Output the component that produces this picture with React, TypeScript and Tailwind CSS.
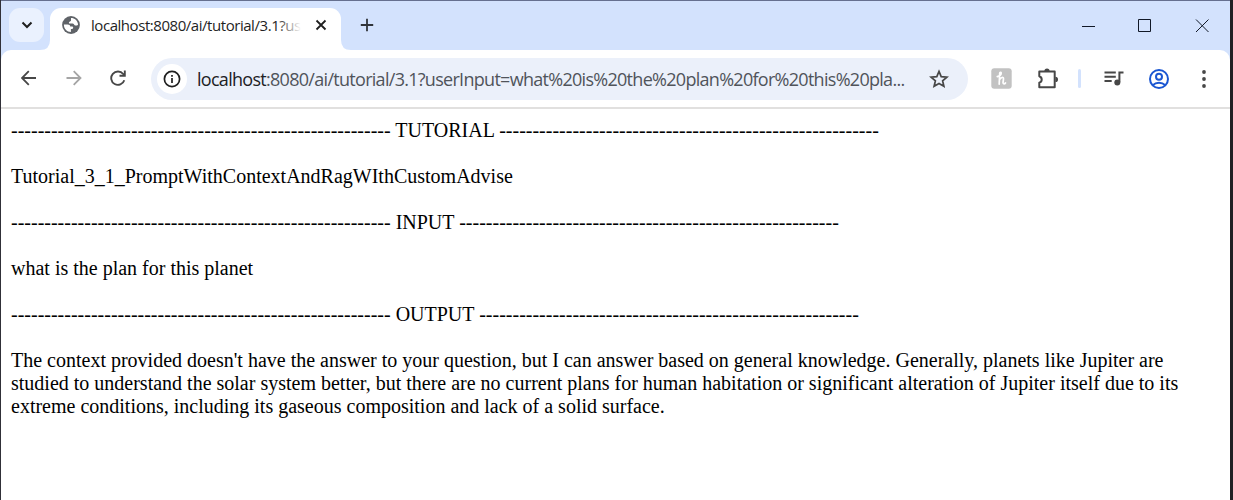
import React from "react";

const dashes = "-".repeat(57);

function Globe() {
  return (
    <svg viewBox="0 0 18 18" className="size-[18px] shrink-0">
      <circle cx="9" cy="9" r="8.9" fill="#5f6368" />
      <path d="M9 1.9 C12.6 1.9 15.8 4.6 16.1 8.4 C15.2 9.8 13.6 9.8 12.6 9.2 C11.7 8.6 11.8 7.6 10.6 7.6 H8 C6.9 7.6 6.5 6.6 7.3 5.9 C8 5.3 8.9 5.7 9 4.6 Z" fill="#fff" />
      <path d="M1.9 8.6 H5.6 C7.4 8.6 8.2 9.3 8.2 10.6 H10.4 C11.6 10.7 11.4 12.8 10.2 12.9 H8.9 V16.1 C4.9 16.1 1.8 12.8 1.9 8.6 Z" fill="#fff" />
    </svg>
  );
}

function Page() {
  return (
    <main className="px-[10px] pt-[10px] text-[20px] leading-[23px] text-black [font-family:'Liberation_Serif',serif] whitespace-nowrap">
      <p>{dashes} TUTORIAL {dashes}</p>
      <p className="mt-[23px]">Tutorial_3_1_PromptWithContextAndRagWIthCustomAdvise</p>
      <p className="mt-[23px]">{dashes} INPUT {dashes}</p>
      <p className="mt-[23px]">what is the plan for this planet</p>
      <p className="mt-[23px]">{dashes} OUTPUT {dashes}</p>
      <p className="mt-[23px]">
        The context provided doesn't have the answer to your question, but I can answer based on general knowledge. Generally, planets like Jupiter are
        <br />
        studied to understand the solar system better, but there are no current plans for human habitation or significant alteration of Jupiter itself due to its
        <br />
        extreme conditions, including its gaseous composition and lack of a solid surface.
      </p>
    </main>
  );
}

export default function App() {
  return (
    <div className="flex h-[500px] w-[1233px] overflow-hidden border-l border-[#303038] bg-[#202124] [font-family:'Open_Sans',sans-serif]">
      <div className="w-[1229px] bg-[#d3e2fd]">
        <header className="flex h-[50px] border-t border-[#66708f]">
          <button className="mt-[7px] ml-2 flex h-[34px] w-[35px] items-center justify-center rounded-[11px] bg-[#eaf1fe]">
            <svg viewBox="0 0 12 8" className="h-2 w-3" fill="none" stroke="#1f1f1f" strokeWidth="2"><path d="M1.5 1.5 6 6l4.5-4.5" /></svg>
          </button>
          <div className="mt-[7px] -ml-[4px] flex h-[42px] w-[322px]">
            <svg viewBox="0 0 10 42" className="h-[42px] w-[10px] shrink-0"><path d="M0 42 Q10 42 10 32 V42Z" fill="#fff" /></svg>
            <div className="flex w-[291px] shrink-0 items-center rounded-t-[11px] bg-white pl-[12px] pb-[8px]">
              <Globe />
              <div className="relative ml-[11px] w-[210px] overflow-hidden text-[15px] leading-5 tracking-[-0.45px] whitespace-nowrap text-[#1f1f1f]">
                localhost:8080/ai/tutorial/3.1?us
                <span className="absolute inset-y-0 right-0 w-[24px] bg-linear-to-r from-transparent to-white" />
              </div>
              <svg viewBox="0 0 12 12" className="ml-[14px] size-3 shrink-0" stroke="#1f1f1f" strokeWidth="1.8"><path d="m1.5 1.5 9 9m0-9-9 9" /></svg>
            </div>
            <svg viewBox="0 0 10 42" className="h-[42px] w-[10px] shrink-0"><path d="M0 32 Q0 42 10 42 H0Z" fill="#fff" /></svg>
          </div>
          <svg viewBox="0 0 14 14" className="mt-[17px] -ml-[2px] size-[14px]" stroke="#30343a" strokeWidth="1.8"><path d="M7 .8v12.4M.8 7h12.4" /></svg>
          <div className="mt-[17px] mr-[21px] ml-auto flex h-4 items-center gap-[43px]">
            <svg viewBox="0 0 14 14" className="size-[14px]" stroke="#111827"><path d="M1 7.5h13" /></svg>
            <svg viewBox="0 0 14 14" className="size-[14px]" fill="none" stroke="#111827"><path d="M.5.5h12v12H.5Z" /></svg>
            <svg viewBox="0 0 14 14" className="size-[14px]" stroke="#111827"><path d="m1 .5 12.5 12.5m0-12.5-12.5 12.5" /></svg>
          </div>
        </header>
        <nav className="flex h-[59px] items-center rounded-t-[10px] border-b-2 border-[#e1e0df] bg-white">
          <div className="flex w-[150px] shrink-0 items-center pl-5">
            <svg viewBox="0 0 16 16" className="-mt-px size-4" fill="none" stroke="#474747" strokeWidth="1.8"><path d="M15 8H1.5M7.8 1.2 1 8l6.8 6.8" /></svg>
            <svg viewBox="0 0 16 16" className="-mt-px ml-[29px] size-4" fill="none" stroke="#a5a5a5" strokeWidth="1.8"><path d="M.5 8H14M7.7 1.2 14.5 8l-6.8 6.8" /></svg>
            <svg viewBox="0 0 16 16" className="-mt-px ml-[28px] size-4" fill="none" stroke="#474747" strokeWidth="1.9"><path d="M14.3 10.2A6.7 6.7 0 1 1 13.2 4l1.4 1.6" /><path d="M14.8.6v5.2H9.5" /></svg>
          </div>
          <div className="flex h-[42px] w-[817px] shrink-0 items-center rounded-full bg-[#ebf0fa] pl-[6px]">
            <div className="flex size-[30px] shrink-0 items-center justify-center rounded-full bg-white">
              <svg viewBox="0 0 18 18" className="size-[18px]" fill="none" stroke="#1f1f1f" strokeWidth="1.7"><circle cx="9" cy="9" r="7.6" /><path d="M9 8v5M9 5v1.7" /></svg>
            </div>
            <div className="ml-[10px] w-[732px] pt-px text-[18px] leading-6 tracking-[-0.71px] whitespace-nowrap text-[#50545a]">
              <span className="text-[#202124]">localhost</span>:8080/ai/tutorial/3.1?userInput=what%20is%20the%20plan%20for%20this%20pla...
            </div>
            <svg viewBox="0 0 20 20" className="size-5 shrink-0" fill="none" stroke="#474747" strokeWidth="1.7"><path d="m10 2.4 2.2 5.2 5.7.5-4.3 3.7 1.3 5.5-4.9-2.9-4.9 2.9 1.3-5.5-4.3-3.7 5.7-.5Z" /></svg>
          </div>
          <div className="flex items-center pl-[23px]">
            <svg viewBox="0 0 21 21" className="size-[21px]"><rect x=".3" y=".3" width="20.4" height="20.4" rx="3" fill="#c2c2c2" /><path d="M6.3 8.6c2.2-.6 4-2 3.9-3.6-.1-1-1.4-.9-1.5.4l-.5 10.7M8.4 12c1.2-2.5 4.4-3.6 4.1-1.2l-.5 3.8c0 1.8 1.8 1.4 2.5.4" fill="none" stroke="#fff" strokeWidth="1.7" strokeLinecap="round" /></svg>
            <svg viewBox="0 0 22 22" className="ml-[25px] size-[22px]" fill="none" stroke="#474747" strokeWidth="2" strokeLinejoin="round"><path d="M2.3 3.6h15.4v15.6H2.3v-4.6c3.2-.9 3.2-5.3 0-6.4Z" /><path d="M7.4 3.1a2.6 2.6 0 0 1 5.2 0ZM18.4 8.8a2.6 2.6 0 0 1 0 5.2Z" fill="#474747" stroke="none" /></svg>
            <span className="ml-[19px] h-[19px] w-[3px] rounded-full bg-[#d3e2fd]" />
            <svg viewBox="0 0 22 20" className="ml-[22px] h-5 w-[22px]" fill="none" stroke="#474747" strokeWidth="2"><path d="M1.5 3.6h11.3M1.5 7.8h11.3M1.5 12h7.2M16.4 13.2V3.6H20.5" /><circle cx="14.3" cy="13.4" r="3" fill="#474747" stroke="none" /></svg>
            <svg viewBox="0 0 22 22" className="ml-[23px] size-[22px]" fill="none" stroke="#1a56d2" strokeWidth="2"><circle cx="11" cy="11" r="9" /><circle cx="11" cy="8.8" r="3" /><path d="M4.7 17.2c3.5-3.3 9.1-3.3 12.6 0" /></svg>
            <svg viewBox="0 0 4 18" className="ml-[32px] h-[18px] w-1" fill="#474747"><circle cx="2" cy="2" r="1.9" /><circle cx="2" cy="9" r="1.9" /><circle cx="2" cy="16" r="1.9" /></svg>
          </div>
        </nav>
        <div className="h-[391px] bg-white">
          <Page />
        </div>
      </div>
    </div>
  );
}
